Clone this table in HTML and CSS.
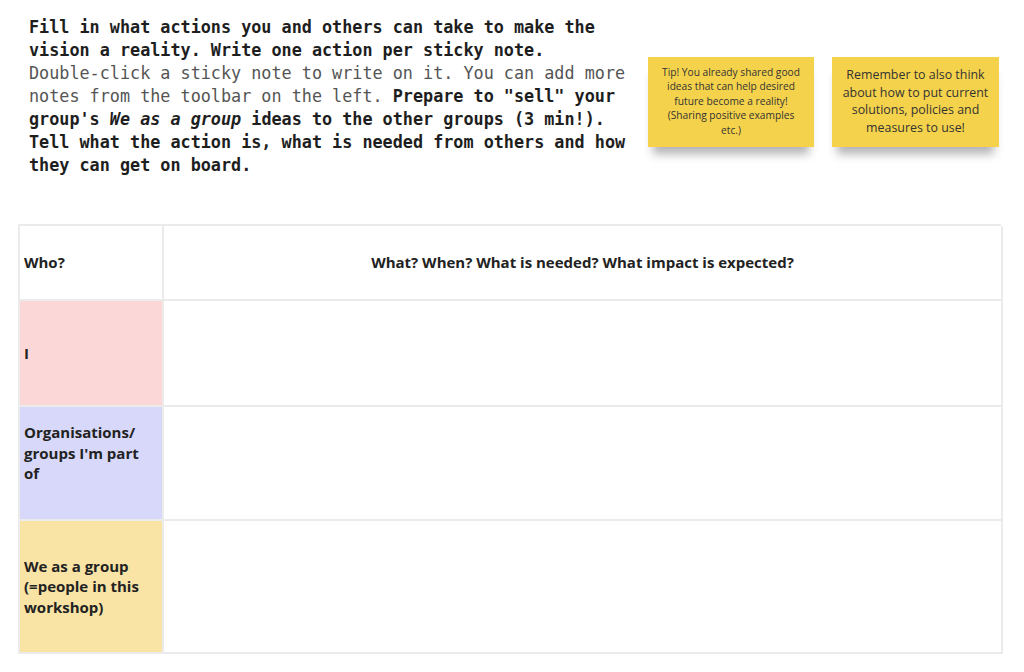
FILE: index.html
```html
<!DOCTYPE html>
<html>
<head>
<meta charset="utf-8">
<link rel="stylesheet" href="styles.css">
</head>
<body>
<div class="page">
  <div class="top">
    <p class="intro"><b>Fill in what actions you and others can take to make the<br>vision a reality. Write one action per sticky note.</b><br>Double-click a sticky note to write on it. You can add more<br>notes from the toolbar on the left. <b>Prepare to "sell" your<br>group's <i>We as a group</i> ideas to the other groups (3 min!).<br>Tell what the action is, what is needed from others and how<br>they can get on board.</b></p>
    <div class="notes">
      <div class="note note-small">Tip! You already shared good<br>ideas that can help desired<br>future become a reality!<br>(Sharing positive examples<br>etc.)</div>
      <div class="note note-big">Remember to also think<br>about how to put current<br>solutions, policies and<br>measures to use!</div>
    </div>
  </div>
  <div class="table">
    <div class="cell who head">Who?</div>
    <div class="cell what head">What? When? What is needed? What impact is expected?</div>
    <div class="cell who pink">I</div>
    <div class="cell what"></div>
    <div class="cell who lav"><span>Organisations/<br>groups I'm part<br>of<br>&nbsp;</span></div>
    <div class="cell what"></div>
    <div class="cell who yel">We as a group<br>(=people in this<br>workshop)</div>
    <div class="cell what"></div>
  </div>
</div>
</body>
</html>
```
FILE: styles.css
```css
html, body {
  margin: 0;
  padding: 0;
  background: #ffffff;
}
.page {
  width: 1024px;
  height: 672px;
  overflow: hidden;
  padding: 16px 0 0 18px;
  box-sizing: border-box;
}
.top {
  display: flex;
  align-items: flex-start;
  height: 208px;
}
.intro {
  margin: 0 0 0 11px;
  width: 606px;
  flex: none;
  white-space: nowrap;
  font-family: "DejaVu Sans Mono", monospace;
  font-size: 16.8px;
  line-height: 23px;
  color: #555555;
}
.intro b {
  color: #1e1e1e;
  font-weight: bold;
}
.notes {
  display: flex;
  gap: 18px;
  margin: 41px 0 0 13px;
}
.note {
  background: #f5d24b;
  font-family: "Open Sans", sans-serif;
  color: #333;
  text-align: center;
  box-sizing: border-box;
  height: 90px;
  white-space: nowrap;
  box-shadow: 0 12px 9px -5px rgba(0,0,0,0.3);
}
.note-small {
  width: 166px;
  font-size: 10.2px;
  line-height: 14.4px;
  padding: 8px 4px 0;
}
.note-big {
  width: 167px;
  font-size: 12.4px;
  line-height: 17.6px;
  padding: 9px 4px 0;
}
.table {
  display: grid;
  grid-template-columns: 144px 839px;
  grid-template-rows: 75px 106px 114px 133px;
  width: 983px;
  border-top: 2px solid #ebebeb;
  border-left: 2px solid #ebebeb;
  box-sizing: border-box;
}
.cell {
  border-right: 2px solid #ebebeb;
  border-bottom: 2px solid #ebebeb;
  font-family: "Open Sans", sans-serif;
  font-weight: 700;
  font-size: 15px;
  line-height: 20.5px;
  color: #222;
  display: flex;
  align-items: center;
  padding: 0 4px;
  background: #ffffff;
}
.what.head {
  justify-content: center;
}
.pink { background: #fcd7d8; }
.lav { background: #d8d9fa; }
.yel { background: #f9e4a5; }
```
